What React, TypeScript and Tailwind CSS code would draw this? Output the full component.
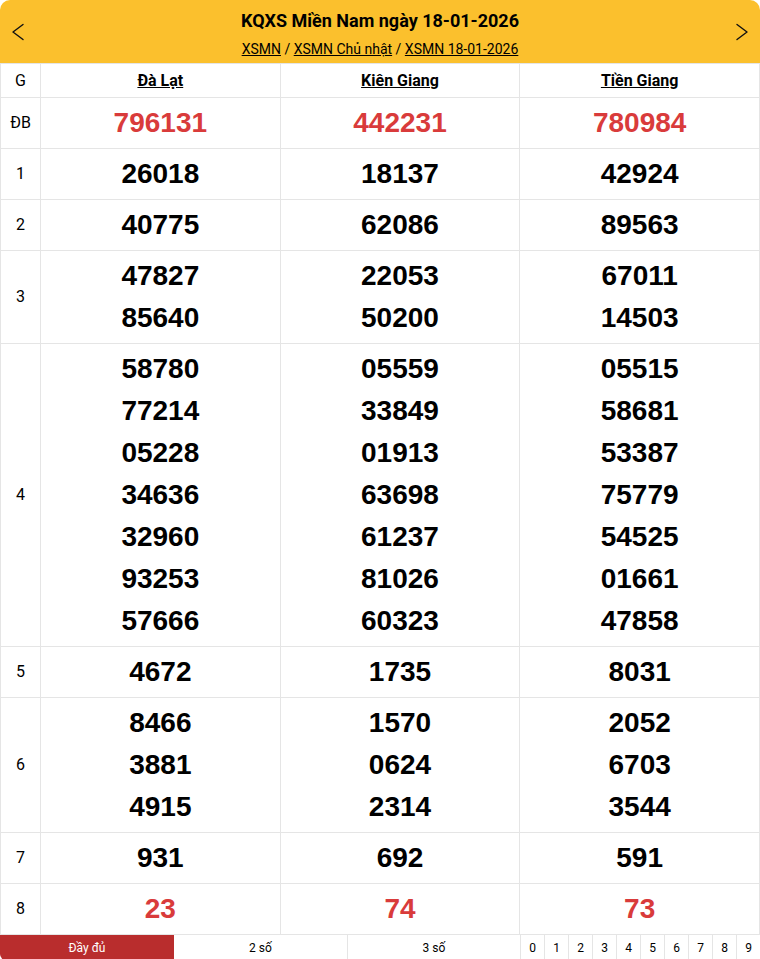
const provinces = ['Đà Lạt', 'Kiên Giang', 'Tiền Giang'];

const prizes: { label: string; red?: boolean; values: string[][] }[] = [
  { label: 'ĐB', red: true, values: [['796131'], ['442231'], ['780984']] },
  { label: '1', values: [['26018'], ['18137'], ['42924']] },
  { label: '2', values: [['40775'], ['62086'], ['89563']] },
  { label: '3', values: [['47827', '85640'], ['22053', '50200'], ['67011', '14503']] },
  {
    label: '4',
    values: [
      ['58780', '77214', '05228', '34636', '32960', '93253', '57666'],
      ['05559', '33849', '01913', '63698', '61237', '81026', '60323'],
      ['05515', '58681', '53387', '75779', '54525', '01661', '47858'],
    ],
  },
  { label: '5', values: [['4672'], ['1735'], ['8031']] },
  { label: '6', values: [['8466', '3881', '4915'], ['1570', '0624', '2314'], ['2052', '6703', '3544']] },
  { label: '7', values: [['931'], ['692'], ['591']] },
  { label: '8', red: true, values: [['23'], ['74'], ['73']] },
];

function Chevron({ dir }: { dir: 'left' | 'right' }) {
  return (
    <svg width="12" height="18" viewBox="0 0 12 18" fill="none" stroke="#111" strokeWidth="1.4" strokeLinecap="round" strokeLinejoin="round">
      {dir === 'left' ? <polyline points="11,1.5 1,9 11,16.5" /> : <polyline points="1,1.5 11,9 1,16.5" />}
    </svg>
  );
}

export default function App() {
  return (
    <div className="w-[760px] bg-white font-['Roboto',sans-serif] text-black">
      <div className="h-[63px] bg-[#fbc02d] rounded-t-[10px] flex items-center justify-between px-3">
        <Chevron dir="left" />
        <div className="flex flex-col items-center">
          <h1 className="text-[18px] font-bold leading-6 mt-[4px]">KQXS Miền Nam ngày 18-01-2026</h1>
          <div className="text-[14px] leading-5 mt-[6px]">
            <a className="underline">XSMN</a> / <a className="underline">XSMN Chủ nhật</a> /{' '}
            <a className="underline">XSMN 18-01-2026</a>
          </div>
        </div>
        <Chevron dir="right" />
      </div>
      <table className="w-full border-collapse table-fixed">
        <colgroup>
          <col className="w-[40px]" />
          <col />
          <col />
          <col />
        </colgroup>
        <thead>
          <tr className="h-[34px]">
            <th className="border border-[#e5e5e5] font-normal text-[16px]">G</th>
            {provinces.map((p) => (
              <th key={p} className="border border-[#e5e5e5] text-[16px] font-bold">
                <span className="underline">{p}</span>
              </th>
            ))}
          </tr>
        </thead>
        <tbody>
          {prizes.map((row) => (
            <tr key={row.label}>
              <td className="border border-[#e5e5e5] text-center text-[16px]">{row.label}</td>
              {row.values.map((col, i) => (
                <td key={i} className="border border-[#e5e5e5] text-center py-1">
                  {col.map((n) => (
                    <div
                      key={n}
                      className={`font-['Liberation_Sans',Arial,sans-serif] font-bold text-[28px] leading-[42px] ${
                        row.red ? 'text-[#d93b3b]' : 'text-black'
                      }`}
                    >
                      {n}
                    </div>
                  ))}
                </td>
              ))}
            </tr>
          ))}
        </tbody>
      </table>
      <div className="flex h-[25px] text-[12px]">
        <div className="w-[174px] bg-[#b92d2d] text-white flex items-center justify-center rounded-bl-[6px]">Đầy đủ</div>
        <div className="w-[174px] border-r border-[#e5e5e5] flex items-center justify-center">2 số</div>
        <div className="w-[173px] border-r border-[#e5e5e5] flex items-center justify-center">3 số</div>
        {['0', '1', '2', '3', '4', '5', '6', '7', '8', '9'].map((d, i) => (
          <div
            key={d}
            className={`flex-1 flex items-center justify-center ${i < 9 ? 'border-r border-[#e5e5e5]' : ''}`}
          >
            {d}
          </div>
        ))}
      </div>
    </div>
  );
}
